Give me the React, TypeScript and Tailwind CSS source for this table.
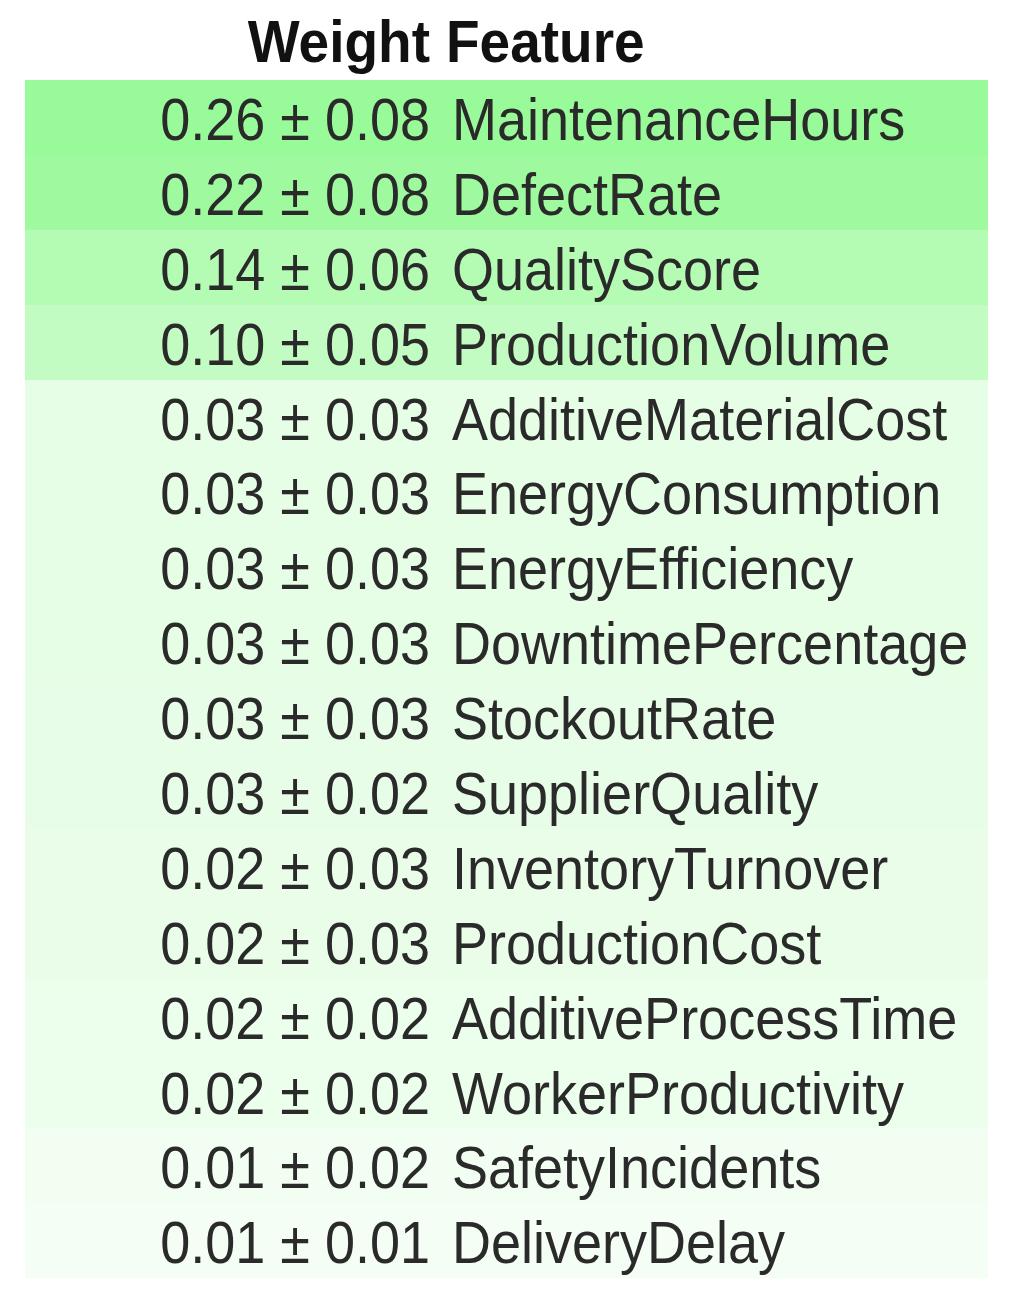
const rows: { w: string; s: string; f: string; bg: string }[] = [
	{ w: "0.26", s: "0.08", f: "MaintenanceHours", bg: "bg-[#98fa98]" },
	{ w: "0.22", s: "0.08", f: "DefectRate", bg: "bg-[#9ffa9f]" },
	{ w: "0.14", s: "0.06", f: "QualityScore", bg: "bg-[#b4fbb4]" },
	{ w: "0.10", s: "0.05", f: "ProductionVolume", bg: "bg-[#c2fcc2]" },
	{ w: "0.03", s: "0.03", f: "AdditiveMaterialCost", bg: "bg-[#e6fde6]" },
	{ w: "0.03", s: "0.03", f: "EnergyConsumption", bg: "bg-[#e6fde6]" },
	{ w: "0.03", s: "0.03", f: "EnergyEfficiency", bg: "bg-[#e6fde6]" },
	{ w: "0.03", s: "0.03", f: "DowntimePercentage", bg: "bg-[#e6fde6]" },
	{ w: "0.03", s: "0.03", f: "StockoutRate", bg: "bg-[#e7fde7]" },
	{ w: "0.03", s: "0.02", f: "SupplierQuality", bg: "bg-[#e8fde8]" },
	{ w: "0.02", s: "0.03", f: "InventoryTurnover", bg: "bg-[#e9fde9]" },
	{ w: "0.02", s: "0.03", f: "ProductionCost", bg: "bg-[#e9fde9]" },
	{ w: "0.02", s: "0.02", f: "AdditiveProcessTime", bg: "bg-[#ecfeec]" },
	{ w: "0.02", s: "0.02", f: "WorkerProductivity", bg: "bg-[#ecfeec]" },
	{ w: "0.01", s: "0.02", f: "SafetyIncidents", bg: "bg-[#f3fef3]" },
	{ w: "0.01", s: "0.01", f: "DeliveryDelay", bg: "bg-[#f4fef4]" },
];

export default function App() {
	return (
		<div className="w-[1010px] h-[1293px] bg-white pt-[0px] pl-[25px] text-[#2a2a2a] font-['Liberation_Sans',Arial,sans-serif]">
			<div className="w-[963px]">
				<div className="grid grid-cols-[405px_1fr] h-[80px] items-center font-bold text-[55px] text-[#111]">
					<div className="text-right scale-y-[1.08]">Weight</div>
					<div className="pl-[16px] scale-y-[1.08]">Feature</div>
				</div>
				{rows.map((r) => (
					<div key={r.f} className={`grid grid-cols-[405px_1fr] h-[74.9px] items-center text-[54px] ${r.bg}`}>
						<div className="text-right whitespace-nowrap scale-y-[1.08]">
							{r.w} ± {r.s}
						</div>
						<div className="pl-[22px] whitespace-nowrap scale-y-[1.08] origin-left">{r.f}</div>
					</div>
				))}
			</div>
		</div>
	);
}
